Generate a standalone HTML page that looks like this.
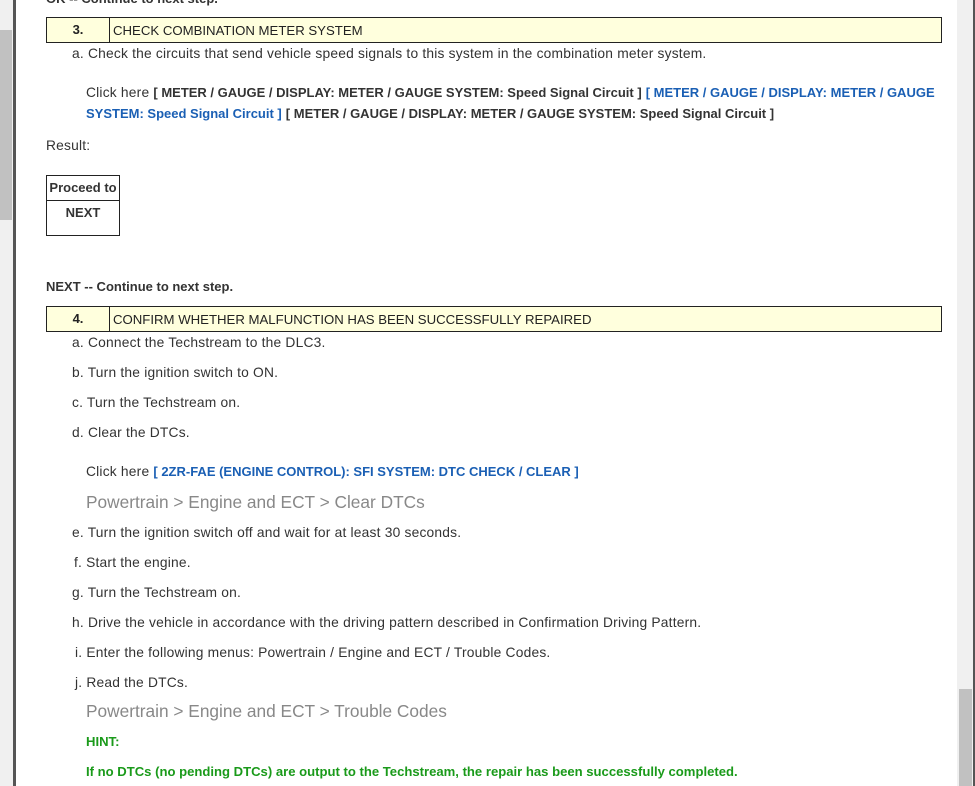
<!DOCTYPE html>
<html><head><meta charset="utf-8"><style>
body{margin:0;width:975px;height:786px;overflow:hidden;background:#fff;font-family:"Liberation Sans",Arial,sans-serif;color:#333;font-size:13.8px;letter-spacing:0.2px;position:relative}
.a{position:absolute;white-space:nowrap}
.b{font-weight:bold;font-size:13px;letter-spacing:0}
.l{color:#1a5fb4;font-weight:bold;font-size:13px;letter-spacing:0}
.hd{position:absolute;left:46px;width:894px;height:24px;border:1px solid #222;background:#ffffdd;font-size:13.2px;color:#222;letter-spacing:0}
.hd .n{position:absolute;left:0;top:0;width:62px;height:24px;border-right:1px solid #222;text-align:center;line-height:24px;font-weight:bold;font-size:13px}
.hd .t{position:absolute;left:66px;top:1px;line-height:24px}
.g{color:#888;font-size:17.3px;letter-spacing:0}
.gr{color:#1a9a1a;font-weight:bold;font-size:13.1px;letter-spacing:0}
</style></head><body>
<div style="position:absolute;left:0;top:0;width:13px;height:786px;background:#f0f0f0"></div>
<div style="position:absolute;left:0;top:30px;width:12px;height:190px;background:#c1c1c1"></div>
<div style="position:absolute;left:13px;top:0;width:3px;height:786px;background:#555"></div>
<div style="position:absolute;left:957px;top:0;width:16px;height:786px;background:#f0f0f0"></div>
<div style="position:absolute;left:959px;top:689px;width:13px;height:97px;background:#c1c1c1"></div>
<div style="position:absolute;left:973px;top:0;width:2px;height:786px;background:#555"></div>

<div class="a b" style="left:46px;top:-9px">OK -- Continue to next step.</div>
<div class="hd" style="top:17px"><div class="n">3.</div><div class="t">CHECK COMBINATION METER SYSTEM</div></div>
<div class="a" style="left:72px;top:46px">a. Check the circuits that send vehicle speed signals to this system in the combination meter system.</div>
<div class="a" style="left:86px;top:85px">Click here <span class="b">[ METER / GAUGE / DISPLAY: METER / GAUGE SYSTEM: Speed Signal Circuit ]</span> <span class="l">[ METER / GAUGE / DISPLAY: METER / GAUGE</span></div>
<div class="a" style="left:86px;top:106px"><span class="l">SYSTEM: Speed Signal Circuit ]</span> <span class="b">[ METER / GAUGE / DISPLAY: METER / GAUGE SYSTEM: Speed Signal Circuit ]</span></div>
<div class="a" style="left:46px;top:138px">Result:</div>
<div style="position:absolute;left:46px;top:175px;width:72px;height:59px;border:1px solid #222">
<div style="height:24px;border-bottom:1px solid #222;text-align:center;line-height:24px;font-weight:bold;font-size:13px;letter-spacing:0">Proceed to</div>
<div style="text-align:center;line-height:24px;font-weight:bold;font-size:13px;letter-spacing:0">NEXT</div></div>
<div class="a b" style="left:46px;top:279px">NEXT -- Continue to next step.</div>
<div class="hd" style="top:306px"><div class="n">4.</div><div class="t">CONFIRM WHETHER MALFUNCTION HAS BEEN SUCCESSFULLY REPAIRED</div></div>
<div class="a" style="left:72px;top:335px">a. Connect the Techstream to the DLC3.</div>
<div class="a" style="left:72px;top:365px">b. Turn the ignition switch to ON.</div>
<div class="a" style="left:72px;top:395px">c. Turn the Techstream on.</div>
<div class="a" style="left:72px;top:425px">d. Clear the DTCs.</div>
<div class="a" style="left:86px;top:464px">Click here <span class="l">[ 2ZR-FAE (ENGINE CONTROL): SFI SYSTEM: DTC CHECK / CLEAR ]</span></div>
<div class="a g" style="left:86px;top:492px">Powertrain &gt; Engine and ECT &gt; Clear DTCs</div>
<div class="a" style="left:72px;top:525px">e. Turn the ignition switch off and wait for at least 30 seconds.</div>
<div class="a" style="left:74px;top:555px">f. Start the engine.</div>
<div class="a" style="left:72px;top:585px">g. Turn the Techstream on.</div>
<div class="a" style="left:72px;top:615px">h. Drive the vehicle in accordance with the driving pattern described in Confirmation Driving Pattern.</div>
<div class="a" style="left:75px;top:645px">i. Enter the following menus: Powertrain / Engine and ECT / Trouble Codes.</div>
<div class="a" style="left:75px;top:675px">j. Read the DTCs.</div>
<div class="a g" style="left:86px;top:701px">Powertrain &gt; Engine and ECT &gt; Trouble Codes</div>
<div class="a gr" style="left:86px;top:734px">HINT:</div>
<div class="a gr" style="left:86px;top:764px">If no DTCs (no pending DTCs) are output to the Techstream, the repair has been successfully completed.</div>
</body></html>
